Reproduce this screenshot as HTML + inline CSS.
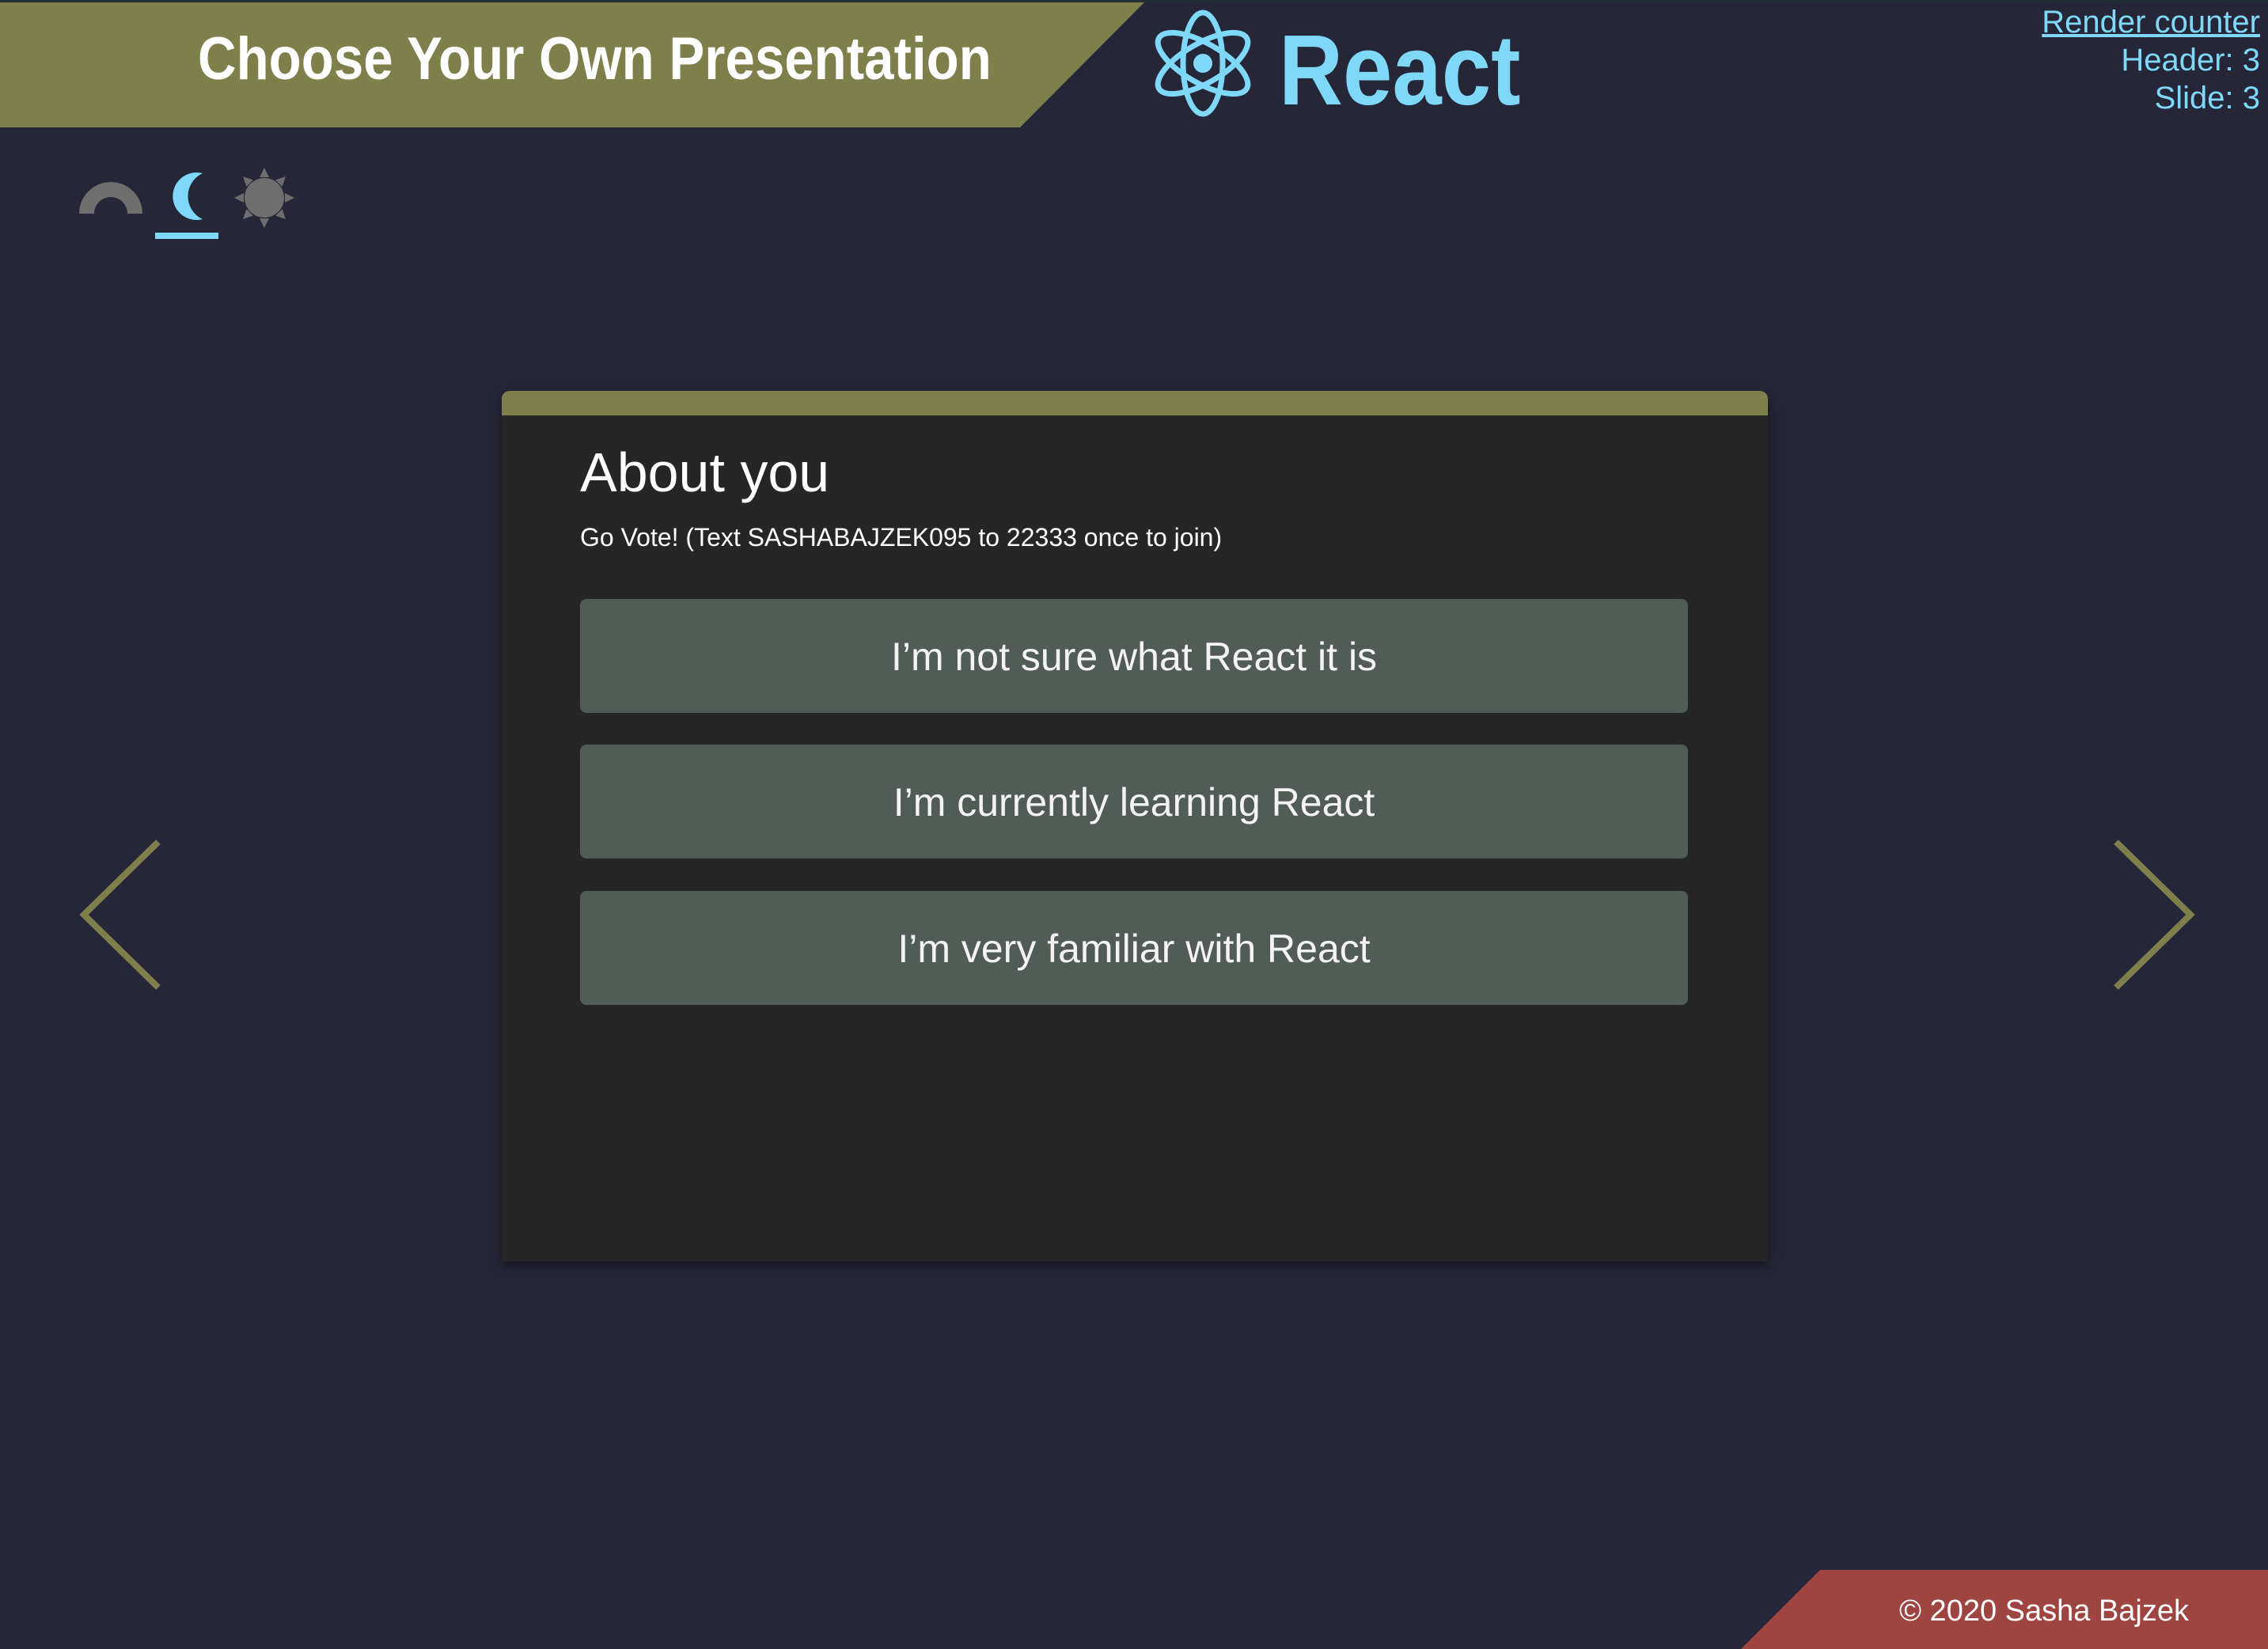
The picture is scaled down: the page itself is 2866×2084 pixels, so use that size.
<!DOCTYPE html>
<html><head><meta charset="utf-8"><style>
html,body{margin:0;padding:0}
body{width:2866px;height:2084px;background:#252638;position:relative;overflow:hidden;font-family:"Liberation Sans",sans-serif}
.abs{position:absolute}
.title{left:250px;top:30px;font-size:76px;font-weight:bold;color:#fff;white-space:nowrap;transform:scaleX(0.885);transform-origin:left top;line-height:90px}
.react{left:1616px;top:14px;font-size:126px;color:#80d8f8;line-height:150px;font-weight:bold;transform:scaleX(0.89);transform-origin:left top}
.rc{right:10px;top:4px;text-align:right;color:#80d8f8;font-size:40px;line-height:48px}
.card{left:634px;top:494px;width:1600px;height:1100px;background:#262626;border-radius:10px 10px 0 0;box-shadow:0 6px 14px rgba(0,0,0,.45);overflow:hidden}
.bar{height:31px;background:#7f7f4b}
.h{position:absolute;left:99px;top:63px;font-size:70px;color:#fff;line-height:80px}
.sub{position:absolute;left:99px;top:167px;font-size:32px;color:#fff;white-space:nowrap}
.btn{position:absolute;left:99px;width:1400px;height:144px;background:#525c56;border-radius:8px;color:#f3f3f3;font-size:50px;text-align:center;line-height:146px}
</style></head><body>
<div class="abs" style="left:0;top:0;width:2866px;height:3px;background:#1f2f33"></div>
<svg class="abs" style="left:0;top:0" width="1450" height="165"><polygon points="0,3 1446,3 1289,161 0,161" fill="#7f7f4b"/></svg>
<div class="abs title">Choose Your Own Presentation</div>
<svg class="abs" style="left:1440px;top:0" width="160" height="160"><g fill="none" stroke="#80d8f8" stroke-width="7" transform="translate(80,80)"><ellipse rx="64" ry="25" transform="rotate(90)"/><ellipse rx="64" ry="25" transform="rotate(30)"/><ellipse rx="64" ry="25" transform="rotate(150)"/></g><circle cx="80" cy="80" r="12" fill="#80d8f8"/></svg>
<div class="abs react">React</div>
<div class="abs rc"><u>Render counter</u><br>Header: 3<br>Slide: 3</div>
<svg class="abs" style="left:80px;top:200px" width="310" height="120">
<path d="M20 70 A40 40 0 0 1 100 70 L81 70 A21 21 0 0 0 39 70 Z" fill="#6e6e6e"/>
<path d="M176 19 A30 30 0 1 0 176 77 A32 32 0 0 1 176 19 Z" fill="#80d8f8"/>
<rect x="116" y="94" width="80" height="8" fill="#80d8f8"/>
<g fill="#6e6e6e" transform="translate(254,50)"><circle r="25"/>
<g id="s"><polygon points="-6,-26 6,-26 0,-38"/></g>
<use href="#s" transform="rotate(45)"/><use href="#s" transform="rotate(90)"/><use href="#s" transform="rotate(135)"/><use href="#s" transform="rotate(180)"/><use href="#s" transform="rotate(225)"/><use href="#s" transform="rotate(270)"/><use href="#s" transform="rotate(315)"/></g>
</svg>
<div class="abs card"><div class="bar"></div>
<div class="h">About you</div>
<div class="sub">Go Vote! (Text SASHABAJZEK095 to 22333 once to join)</div>
<div class="btn" style="top:263px">I’m not sure what React it is</div>
<div class="btn" style="top:447px">I’m currently learning React</div>
<div class="btn" style="top:632px">I’m very familiar with React</div>
</div>
<svg class="abs" style="left:90px;top:1055px" width="2700" height="205" fill="none" stroke="#7f7f4b" stroke-width="8"><polyline points="110,9 16,101 110,193"/><polyline points="2584,9 2678,101 2584,193"/></svg>
<svg class="abs" style="left:2200px;top:1984px" width="666" height="100"><polygon points="100,0 666,0 666,100 0,100" fill="#9e4441"/><text x="200" y="64" fill="#fff" font-family="Liberation Sans" font-size="38">© 2020 Sasha Bajzek</text></svg>
</body></html>
